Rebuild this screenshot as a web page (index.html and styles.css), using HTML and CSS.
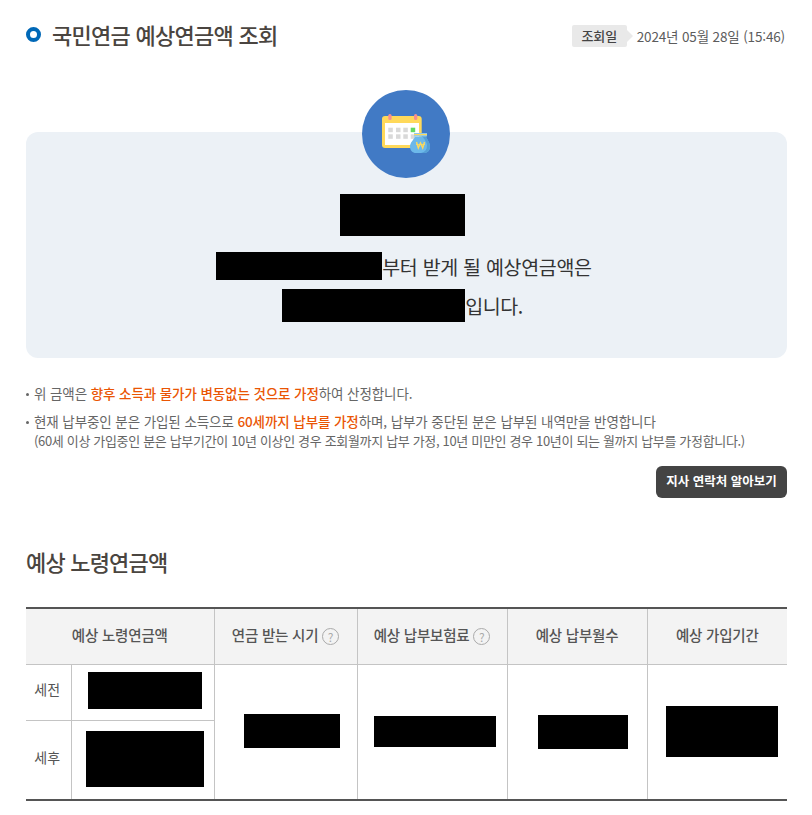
FILE: index.html
```html
<!DOCTYPE html>
<html lang="ko">
<head>
<meta charset="utf-8">
<title>국민연금 예상연금액 조회</title>
<link rel="stylesheet" href="styles.css">
</head>
<body>
<main class="page">
  <header class="top">
    <h1 class="title"><span class="ring"></span>국민연금 예상연금액 조회</h1>
    <div class="date"><span class="date-tag">조회일</span><span>2024년 05월 28일 (15:46)</span></div>
  </header>

  <section class="hero">
    <div class="hero-icon">
      <svg width="88" height="88" viewBox="0 0 88 88" aria-hidden="true">
        <circle cx="44" cy="44" r="44" fill="#417ac5"/>
        <rect x="20" y="26" width="39.700" height="32" rx="3" fill="#ffd95a"/>
        <rect x="23" y="33" width="34" height="22" fill="#fff"/>
        <rect x="26.300" y="24" width="3.300" height="6" rx="1.600" fill="#f58f8f"/>
        <rect x="52" y="24" width="3.300" height="6" rx="1.600" fill="#f58f8f"/>
        <g fill="#d9d9d9">
          <rect x="26.300" y="37.700" width="4.500" height="4.500"/><rect x="34" y="37.700" width="4.500" height="4.500"/><rect x="41.300" y="37.700" width="4.500" height="4.500"/>
          <rect x="26.300" y="44.300" width="4.500" height="4.500"/><rect x="34" y="44.300" width="4.500" height="4.500"/><rect x="41.300" y="44.300" width="4.500" height="4.500"/><rect x="48.700" y="44.300" width="4.500" height="4.500"/>
        </g>
        <rect x="48.700" y="37.700" width="4.500" height="4.500" fill="#62d962"/>
        <path d="M53 46.500h11c1 3 4 6 4 10 0 4-2.500 6.500-6 6.500h-8c-3.500 0-6-2.500-6-6.500 0-4 4-7 5-10z" fill="#6cb8ea"/>
        <path d="M60.500 46.500h3.500c1 3 4 6 4 10 0 4-2.500 6.500-6 6.500h-3c4-1 6-3.500 6-7.500 0-3.500-3-6-4.500-9.500z" fill="#559fd6"/>
        <rect x="52" y="43" width="13" height="3.500" fill="#8cc8ee"/>
        <rect x="52" y="44" width="13" height="1.200" fill="#ffd95a"/>
        <path d="M54.500 52l1.800 6 2.200-5 2.200 5 1.800-6" fill="none" stroke="#ffd95a" stroke-width="1.400"/>
        <path d="M54 54.500h9" stroke="#ffd95a" stroke-width=".8"/>
      </svg>
    </div>
    <div class="hide hide-name"></div>
    <p class="hero-line first"><span class="hide hide-date"></span><span>부터 받게 될 예상연금액은</span></p>
    <p class="hero-line second"><span class="hide hide-amount"></span><span>입니다.</span></p>
  </section>

  <ul class="notes">
    <li>위 금액은 <b>향후 소득과 물가가 변동없는 것으로 가정</b>하여 산정합니다.</li>
    <li>현재 납부중인 분은 가입된 소득으로 <b>60세까지 납부를 가정</b>하며, 납부가 중단된 분은 납부된 내역만을 반영합니다<span class="note-sub">(60세 이상 가입중인 분은 납부기간이 10년 이상인 경우 조회월까지 납부 가정, 10년 미만인 경우 10년이 되는 월까지 납부를 가정합니다.)</span></li>
  </ul>

  <div class="actions"><a class="btn">지사 연락처 알아보기</a></div>

  <h2 class="sub">예상 노령연금액</h2>

  <table class="grid">
    <colgroup>
      <col class="c1"><col class="c2"><col class="c3"><col class="c4"><col class="c5"><col class="c6">
    </colgroup>
    <thead>
      <tr>
        <th colspan="2">예상 노령연금액</th>
        <th>연금 받는 시기 <span class="q">?</span></th>
        <th>예상 납부보험료 <span class="q">?</span></th>
        <th>예상 납부월수</th>
        <th>예상 가입기간</th>
      </tr>
    </thead>
    <tbody>
      <tr class="r1">
        <td class="lab">세전</td>
        <td class="amt a1"><div class="hide h-a"></div></td>
        <td rowspan="2" class="pc"><div class="hide h-c"></div></td>
        <td rowspan="2" class="pd"><div class="hide h-d"></div></td>
        <td rowspan="2" class="pe"><div class="hide h-e"></div></td>
        <td rowspan="2" class="pf"><div class="hide h-f"></div></td>
      </tr>
      <tr class="r2">
        <td class="lab">세후</td>
        <td class="amt a2"><div class="hide h-b"></div></td>
      </tr>
    </tbody>
  </table>
</main>
</body>
</html>
```

FILE: styles.css
```css
* { box-sizing: border-box; }
html, body { margin: 0; padding: 0; background: #fff; }
body {
  font-family: "Noto Sans CJK KR", "Noto Sans", sans-serif;
  font-size: 13.500px;
  color: #555;
  height: 815px;
  overflow: hidden;
}
.page { padding: 16px 25px 0 26px; }

.top { display: flex; justify-content: space-between; align-items: flex-start; height: 74px; }
.title {
  margin: 0;
  display: flex;
  align-items: center;
  gap: 11px;
  font-size: 22px;
  line-height: 36px;
  font-weight: 500;
  letter-spacing: -0.72px;
  color: #4a4540;
}
.ring { width: 15px; height: 15px; border: 4.500px solid #0068b7; border-radius: 50%; background: #fff; }
.date { display: flex; align-items: center; gap: 10px; margin: 9px 2px 0 0; font-size: 13.500px; letter-spacing: -0.15px; color: #5c5c5c; }
.date-tag {
  position: relative;
  width: 55px;
  height: 22px;
  line-height: 21px;
  text-align: center;
  background: #e9e9e9;
  border-radius: 2px;
  font-size: 13px;
  font-weight: 500;
  color: #444;
}
.date-tag::after {
  content: "";
  position: absolute;
  left: 55px;
  top: 5px;
  border: 6px solid transparent;
  border-left-color: #e9e9e9;
  border-right-width: 0;
}

.hero {
  position: relative;
  margin-top: 42px;
  height: 226px;
  padding-top: 62px;
  background: #ecf1f6;
  border-radius: 12px;
  display: flex;
  flex-direction: column;
  align-items: center;
}
.hero-icon { position: absolute; top: -42px; left: 336px; width: 88px; height: 88px; }
.hero-icon svg { display: block; }
.hide { background: #000; }
.hide-name { width: 125px; height: 42px; margin-left: -8px; }
.hero-line { margin: 0; display: flex; align-items: center; font-size: 19.500px; letter-spacing: -0.3px; color: #333; }
.hero-line.first { margin-top: 16px; height: 28px; margin-left: -5px; }
.hero-line.second { margin-top: 9px; height: 33px; margin-left: -8px; letter-spacing: -0.5px; }
.hide-date { display: block; width: 166px; height: 28px; }
.hide-amount { display: block; width: 183px; height: 33px; }

.notes { list-style: none; margin: 25px 0 0; padding: 0; font-size: 13.500px; letter-spacing: -0.09px; line-height: 21px; color: #666; }
.notes li { position: relative; padding-left: 8px; margin-bottom: 7px; }
.notes li::before { content: ""; position: absolute; left: 0; top: 10px; width: 3px; height: 3px; border-radius: 50%; background: #666; }
.notes b { font-weight: 500; color: #ea5504; }
.note-sub { display: block; font-size: 13px; line-height: 17px; letter-spacing: -0.33px; }

.actions { display: flex; justify-content: flex-end; margin-top: 17px; }
.btn {
  display: block;
  width: 131px;
  height: 32px;
  line-height: 30px;
  text-align: center;
  background: #444;
  border-radius: 6px;
  color: #fff;
  font-size: 12.500px;
  font-weight: 700;
}

.sub { margin: 45px 0 0; font-size: 22px; line-height: 36px; font-weight: 500; letter-spacing: -0.8px; color: #4a4540; }

.grid {
  width: 761px;
  margin-top: 28px;
  table-layout: fixed;
  border-collapse: collapse;
  border-top: 2px solid #555;
  border-bottom: 2px solid #555;
}
.c1 { width: 45px; } .c2 { width: 143px; } .c3 { width: 143px; } .c4 { width: 150px; } .c5 { width: 140px; } .c6 { width: 140px; }
.grid th {
  height: 56px;
  padding: 0 0 4px;
  background: #f3f3f3;
  border-left: 1px solid #c4c4c4;
  border-bottom: 1px solid #c4c4c4;
  font-size: 14.500px;
  font-weight: 500;
  letter-spacing: -0.2px;
  color: #555;
}
.grid th:first-child, .grid td:first-child { border-left: 0; }
.grid td { padding: 0; border-left: 1px solid #c4c4c4; text-align: center; vertical-align: middle; }
.r1 td.lab, .r1 td.amt { border-bottom: 1px solid #c4c4c4; }
.r1 { height: 56px; }
.r2 { height: 80px; }
.grid td.lab { font-size: 14px; color: #555; padding: 0 2px 6px 0; }
.grid td.a1 { padding: 0 0 4px 4px; }
.grid td.a2 { padding: 0 0 2px 4px; }
.grid td.pc { padding: 0 0 2px 12px; }
.grid td.pd { padding-left: 6px; }
.grid td.pe { padding-left: 12px; }
.grid td.pf { padding-left: 9px; }
.q {
  display: inline-block;
  width: 17px;
  height: 17px;
  line-height: 15px;
  border: 1px solid #aaa;
  border-radius: 50%;
  font-size: 12px;
  font-weight: 400;
  letter-spacing: 0;
  color: #aaa;
  vertical-align: -1px;
}
.h-a { width: 114px; height: 37px; margin: 0 auto; }
.h-b { width: 118px; height: 56px; margin: 0 auto; }
.h-c { width: 96px; height: 34px; margin: 0 auto; }
.h-d { width: 122px; height: 31px; margin: 0 auto; }
.h-e { width: 90px; height: 34px; margin: 0 auto; }
.h-f { width: 112px; height: 51px; margin: 0 auto; }
```
